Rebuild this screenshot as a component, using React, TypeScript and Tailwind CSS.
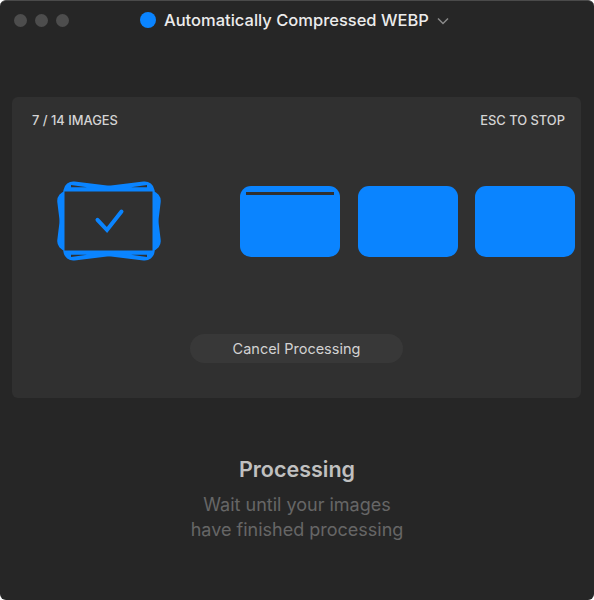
const BLUE = "#0a84ff";
const PANEL = "#303030";

function StackIcon() {
  return (
    <svg width="106" height="82" viewBox="0 0 106 82" fill="none" className="shrink-0">
      <g fill={BLUE} stroke={BLUE} strokeWidth="4" strokeLinejoin="round">
        <rect x="6" y="8" width="94" height="66" rx="8" transform="rotate(7 53 41)" />
        <rect x="6" y="8" width="94" height="66" rx="8" transform="rotate(-7 53 41)" />
      </g>
      {/* slivers where the back sheets show through */}
      <g fill={PANEL}>
        <path d="M15 5 L31 7.300 L15 7.300 Z" />
        <path d="M91 5 L75 7.300 L91 7.300 Z" />
        <path d="M15 77 L31 74.700 L15 74.700 Z" />
        <path d="M91 77 L75 74.700 L91 74.700 Z" />
      </g>
      <rect x="8.500" y="11.500" width="88" height="59" fill={PANEL} />
      <path d="M41.500 39.800 L51 50 L65.500 31.500" stroke={BLUE} strokeWidth="4" strokeLinecap="round" />
    </svg>
  );
}

export default function App() {
  return (
    <div className="h-[600px] w-[594px] overflow-hidden bg-white font-['Inter',sans-serif]">
      <div className="flex h-full flex-col rounded-[6px] border-t border-[#4a4a4a] bg-[#262626]">
        <div className="flex h-[96px] items-start px-[14px] pt-[11px]">
          <div className="flex w-[126px] gap-[8px] pt-[2px]">
            <span className="h-[13px] w-[13px] rounded-full bg-[#4d4d4d]" />
            <span className="h-[13px] w-[13px] rounded-full bg-[#4d4d4d]" />
            <span className="h-[13px] w-[13px] rounded-full bg-[#4d4d4d]" />
          </div>
          <span className="h-[16px] w-[16px] rounded-full bg-[#0a84ff]" />
          <span className="ml-[8px] text-[16.5px] leading-[16px] font-medium text-[#ececec]">Automatically Compressed WEBP</span>
          <svg width="12" height="8" viewBox="0 0 12 8" fill="none" className="mt-[5px] ml-[8px]">
            <path d="M1 1.500 L6 6.500 L11 1.500" stroke="#8a8a8a" strokeWidth="1.500" />
          </svg>
        </div>

        <div className="mx-[12px] flex h-[301px] w-[569px] flex-col overflow-hidden rounded-[6px] bg-[#303030]">
          <div className="flex items-center justify-between pt-[16px] pr-[16px] pl-[20px] text-[12.9px] leading-[15px] font-medium text-[#d4d4d4]">
            <span>7 / 14 IMAGES</span>
            <span>ESC TO STOP</span>
          </div>
          <div className="mt-[52px] flex items-center pl-[44px]">
            <StackIcon />
            <div className="ml-[78px] flex gap-[17.5px]">
              <div className="h-[71px] w-[100px] rounded-[11px] bg-[#0a84ff] px-[6px] pt-[6px]">
                <div className="h-[3px] bg-[#303030]" />
              </div>
              <div className="h-[71px] w-[100px] rounded-[11px] bg-[#0a84ff]" />
              <div className="h-[71px] w-[100px] rounded-[11px] bg-[#0a84ff]" />
            </div>
          </div>
          <button className="mx-auto mt-[72px] h-[29px] w-[213px] rounded-full bg-[#383838] text-[14.5px] text-[#d2d2d2]">
            Cancel Processing
          </button>
        </div>

        <div className="mt-[57px] text-center">
          <h1 className="text-[21.5px] leading-[28px] font-semibold text-[#c0c0c0]">Processing</h1>
          <p className="mt-[9px] text-[18px] leading-[25px] text-[#666666]">
            Wait until your images
            <br />
            have finished processing
          </p>
        </div>
      </div>
    </div>
  );
}
